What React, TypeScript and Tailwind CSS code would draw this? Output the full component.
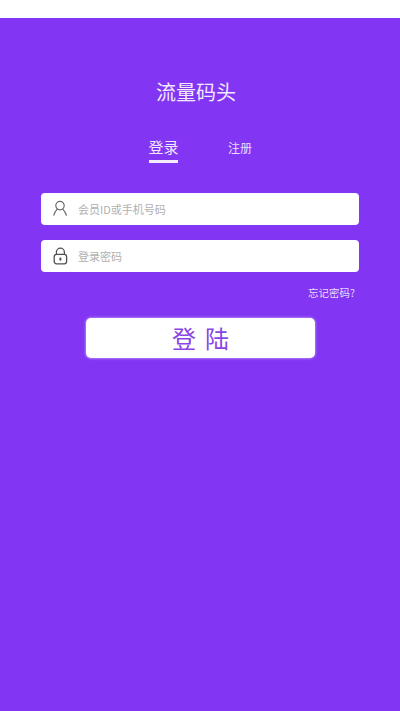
const font = { fontFamily: '"Noto Sans CJK SC", "Liberation Sans", sans-serif' };

function UserIcon() {
  return (
    <svg width="17" height="18" viewBox="0 0 17 18" fill="none" stroke="#6b6b6b" strokeWidth="1.2" strokeLinecap="round">
      <circle cx="8" cy="5.6" r="4.2" />
      <path d="M5.2 9.2C3.6 11 2.4 13 1.8 15.2" />
      <path d="M10.8 9.2C12.4 11 13.6 13 14.4 15.2" />
    </svg>
  );
}

function LockIcon() {
  return (
    <svg width="17" height="18" viewBox="0 0 17 18" fill="none" stroke="#4f4f4f" strokeWidth="1.3">
      <path d="M4.4 7.5V5.2a4 4 0 0 1 8 0v2.3" />
      <rect x="2.2" y="7.4" width="12.4" height="9.4" rx="2.4" />
      <rect x="7.4" y="10.4" width="2" height="3.4" rx="1" fill="#4f4f4f" stroke="none" />
    </svg>
  );
}

export default function App() {
  return (
    <div className="flex h-[711px] w-[400px] flex-col overflow-hidden bg-[#8235f3]" style={font}>
      <div className="h-[18px] bg-white" />

      <h1 className="mt-[59px] pr-[8px] text-center text-[20px] leading-[30px] font-normal text-[#f3e9fe]">流量码头</h1>

      <div className="mt-[28px] flex h-[36px] pl-[149px]">
        <div className="flex w-[29px] flex-col items-center">
          <span className="text-[15px] leading-[24px] whitespace-nowrap text-[#f3e9fe]">登录</span>
          <div className="mt-[1px] h-[3px] w-full bg-[#f3eafe]" />
        </div>
        <span className="mt-[1px] ml-[50px] text-[12px] leading-[24px] whitespace-nowrap text-[#eadffc]">注册</span>
      </div>

      <div className="mt-[22px] flex flex-col gap-[15px] px-[41px]">
        <div className="flex h-[32px] items-center rounded-[4px] bg-white pl-[11px]">
          <UserIcon />
          <span className="ml-[9px] text-[11px] text-[#b0b0b0]">会员ID或手机号码</span>
        </div>
        <div className="flex h-[32px] items-center rounded-[4px] bg-white pl-[11px]">
          <LockIcon />
          <span className="ml-[9px] text-[11px] text-[#b0b0b0]">登录密码</span>
        </div>
      </div>

      <div className="mt-[13px] pr-[45px] text-right text-[10.5px] leading-[15px] text-[#eadcfd]">忘记密码?</div>

      <div className="mt-[18px] ml-[86px] flex h-[40px] w-[229px] items-center justify-center rounded-[5px] bg-white text-[24px] tracking-[9px] text-[#8a45e6] shadow-[0_0_3px_rgba(255,255,255,0.7)]">
        <span className="ml-[9px] font-normal">登陆</span>
      </div>
    </div>
  );
}
